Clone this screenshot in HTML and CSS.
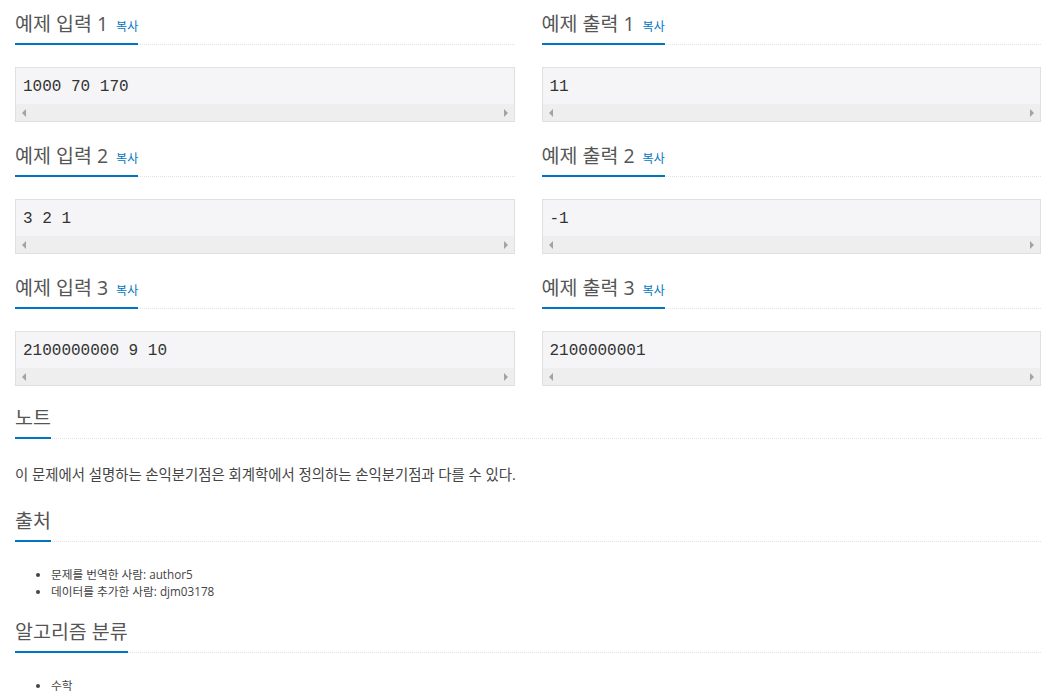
FILE: index.html
```html
<!DOCTYPE html>
<html lang="ko">
<head>
  <meta charset="UTF-8" />
  <title>예제</title>
  <link rel="stylesheet" href="styles.css">
</head>
<body>
  <div class="page">
    <div class="samples">
      <!-- 예제 1 -->
      <section class="sample">
        <div class="headline"><h2>예제 입력 1 <button class="copy">복사</button></h2></div>
        <div class="sampledata"><pre>1000 70 170</pre><div class="hscroll"><i class="arr left"></i><i class="arr right"></i></div></div>
      </section>
      <section class="sample">
        <div class="headline"><h2>예제 출력 1 <button class="copy">복사</button></h2></div>
        <div class="sampledata"><pre>11</pre><div class="hscroll"><i class="arr left"></i><i class="arr right"></i></div></div>
      </section>

      <!-- 예제 2 -->
      <section class="sample">
        <div class="headline"><h2>예제 입력 2 <button class="copy">복사</button></h2></div>
        <div class="sampledata"><pre>3 2 1</pre><div class="hscroll"><i class="arr left"></i><i class="arr right"></i></div></div>
      </section>
      <section class="sample">
        <div class="headline"><h2>예제 출력 2 <button class="copy">복사</button></h2></div>
        <div class="sampledata"><pre>-1</pre><div class="hscroll"><i class="arr left"></i><i class="arr right"></i></div></div>
      </section>

      <!-- 예제 3 -->
      <section class="sample">
        <div class="headline"><h2>예제 입력 3 <button class="copy">복사</button></h2></div>
        <div class="sampledata"><pre>2100000000 9 10</pre><div class="hscroll"><i class="arr left"></i><i class="arr right"></i></div></div>
      </section>
      <section class="sample">
        <div class="headline"><h2>예제 출력 3 <button class="copy">복사</button></h2></div>
        <div class="sampledata"><pre>2100000001</pre><div class="hscroll"><i class="arr left"></i><i class="arr right"></i></div></div>
      </section>
    </div>

    <section class="block">
      <div class="headline"><h2>노트</h2></div>
      <p class="note">이 문제에서 설명하는 손익분기점은 회계학에서 정의하는 손익분기점과 다를 수 있다.</p>
    </section>

    <section class="block">
      <div class="headline"><h2>출처</h2></div>
      <ul class="list">
        <li>문제를 번역한 사람: author5</li>
        <li>데이터를 추가한 사람: djm03178</li>
      </ul>
    </section>

    <section class="block">
      <div class="headline"><h2>알고리즘 분류</h2></div>
      <ul class="list">
        <li>수학</li>
      </ul>
    </section>
  </div>
</body>
</html>
```

FILE: styles.css
```css
body, html {
  margin: 0;
  padding: 0;
  background: #fff;
  color: #333;
  font-family: "Open Sans", "Noto Sans CJK KR", sans-serif;
}
.page {
  padding: 0 14px 0 15px;
}
.samples {
  display: grid;
  grid-template-columns: 1fr 1fr;
  column-gap: 27px;
}
.headline {
  border-bottom: 1px dotted #dfe3e8;
  margin-bottom: 22px;
}
.headline h2 {
  display: inline-block;
  margin: 0 0 -1px;
  padding: 12px 0 7px;
  font-size: 19.5px;
  font-weight: normal;
  line-height: 24px;
  color: #555;
  border-bottom: 2px solid #0076c0;
}
.copy {
  border: none;
  background: none;
  padding: 0 0 0 3px;
  font-family: inherit;
  font-size: 12px;
  color: #0076c0;
}
.sampledata {
  background: #f5f5f7;
  border: 1px solid #e0e0e3;
  margin-bottom: 10px;
}
.sampledata pre {
  margin: 0;
  padding: 9px 7px 7px;
  font-family: "Liberation Mono", "Courier New", monospace;
  font-size: 16px;
  line-height: 20px;
  color: #333;
}
.hscroll {
  height: 17px;
  background: #eeeeef;
  display: flex;
  justify-content: space-between;
  align-items: center;
  padding: 0 6px;
}
.arr {
  width: 0;
  height: 0;
  border-top: 4px solid transparent;
  border-bottom: 4px solid transparent;
}
.arr.left {
  border-right: 4px solid #a3a3a3;
}
.arr.right {
  border-left: 4px solid #a3a3a3;
}
.block .headline {
  margin-bottom: 24px;
}
.block .headline h2 {
  padding-top: 10px;
}
.note {
  margin: 0 0 12px;
  font-size: 14.4px;
  line-height: 24px;
  color: #444;
}
.list {
  margin: 0 0 10px;
  padding-left: 36px;
  font-size: 11.7px;
  line-height: 17px;
  color: #444;
}
```
